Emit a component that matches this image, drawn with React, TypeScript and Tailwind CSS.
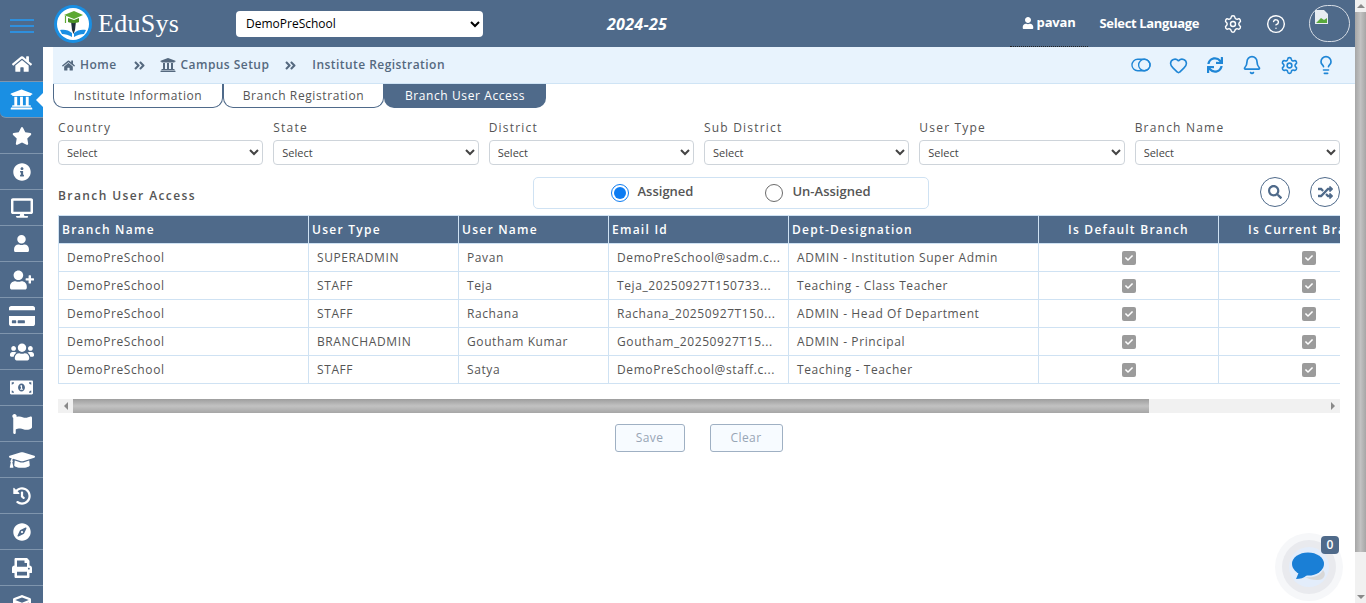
import { Bell, CircleHelp, Heart, Lightbulb, Settings } from 'lucide-react'
import {
  FaAngleDoubleRight,
  FaCheck,
  FaCompass,
  FaCreditCard,
  FaCube,
  FaDesktop,
  FaFlag,
  FaGraduationCap,
  FaHistory,
  FaHome,
  FaInfoCircle,
  FaMoneyBillAlt,
  FaPrint,
  FaRandom,
  FaSearch,
  FaStar,
  FaSync,
  FaUniversity,
  FaUser,
  FaUserPlus,
  FaUsers,
} from 'react-icons/fa'

const sideIcons = [
  { Icon: FaHome, size: 20 },
  { Icon: FaUniversity, size: 23, active: true },
  { Icon: FaStar, size: 20 },
  { Icon: FaInfoCircle, size: 18 },
  { Icon: FaDesktop, size: 22 },
  { Icon: FaUser, size: 17 },
  { Icon: FaUserPlus, size: 24 },
  { Icon: FaCreditCard, size: 26 },
  { Icon: FaUsers, size: 24 },
  { Icon: FaMoneyBillAlt, size: 23 },
  { Icon: FaFlag, size: 20 },
  { Icon: FaGraduationCap, size: 26 },
  { Icon: FaHistory, size: 18 },
  { Icon: FaCompass, size: 18 },
  { Icon: FaPrint, size: 20 },
  { Icon: FaCube, size: 18 },
]

const filters = ['Country', 'State', 'District', 'Sub District', 'User Type', 'Branch Name']

const rows = [
  ['DemoPreSchool', 'SUPERADMIN', 'Pavan', 'DemoPreSchool@sadm.c...', 'ADMIN - Institution Super Admin'],
  ['DemoPreSchool', 'STAFF', 'Teja', 'Teja_20250927T150733...', 'Teaching - Class Teacher'],
  ['DemoPreSchool', 'STAFF', 'Rachana', 'Rachana_20250927T150...', 'ADMIN - Head Of Department'],
  ['DemoPreSchool', 'BRANCHADMIN', 'Goutham Kumar', 'Goutham_20250927T15...', 'ADMIN - Principal'],
  ['DemoPreSchool', 'STAFF', 'Satya', 'DemoPreSchool@staff.c...', 'Teaching - Teacher'],
]

function Logo() {
  return (
    <svg width="38" height="38" viewBox="0 0 38 38" aria-hidden="true">
      <circle cx="19" cy="19" r="19" fill="#1a8fe3" />
      <circle cx="19" cy="19" r="16" fill="#ffffff" />
      <path d="M6 25c4-1 9 0 12 3v4c-3-2-7-3-10-3zM32 25c-4-1-9 0-12 3v4c3-2 7-3 10-3z" fill="#1a8fe3" />
      <path d="M17 16h5l-1 9-1.500 4-1.500-4z" fill="#1f2d3a" />
      <path d="M10 10l10-4 9 4-9 4z" fill="#5da832" />
      <path d="M14 13v4c3 1.500 8 1.500 11 0v-4l-5 2z" fill="#4a8f26" />
      <path d="M11.500 11v7" stroke="#5da832" strokeWidth="1.200" />
    </svg>
  )
}

function Check() {
  return (
    <span className="flex h-[14px] w-[14px] items-center justify-center rounded-[2px] bg-[#9b9b9b] text-white">
      <FaCheck size={8} />
    </span>
  )
}

function Radio({ checked, label }: { checked?: boolean; label: string }) {
  return (
    <div className="flex items-center gap-[9px]">
      <span
        className={`flex h-[18px] w-[18px] items-center justify-center rounded-full border ${checked ? 'border-[#0d7cf2]' : 'border-[#6b6b6b]'}`}
      >
        {checked && <span className="h-3 w-3 rounded-full bg-[#0d7cf2]" />}
      </span>
      <span className="-mt-[2px] text-[13px] font-semibold text-[#555]">{label}</span>
    </div>
  )
}

export default function App() {
  return (
    <div className="flex h-[603px] overflow-hidden bg-white font-['Open_Sans','Noto_Sans',sans-serif] text-[#555]">
      <div className="flex min-w-0 flex-1 flex-col">
        <header className="flex h-[47px] shrink-0 items-center bg-[#4f6a8a] text-white">
          <div className="flex w-[43px] shrink-0 flex-col items-center gap-[4px] pt-[5px]">
            <span className="h-[2px] w-6 bg-[#2f8fdc]" />
            <span className="h-[2px] w-6 bg-[#2f8fdc]" />
            <span className="h-[2px] w-6 bg-[#2f8fdc]" />
          </div>
          <div className="ml-[11px]">
            <Logo />
          </div>
          <span className="ml-[6px] w-[80px] font-['Liberation_Serif',serif] text-[26px] tracking-[0.3px]">EduSys</span>
          <select className="ml-[58px] h-[26px] w-[247px] rounded-[4px] bg-white pl-[6px] text-[12px] text-black">
            <option>DemoPreSchool</option>
          </select>
          <span className="ml-[124px] text-[16px] font-bold italic tracking-[0.3px]">2024-25</span>
          <div className="ml-auto flex h-[47px] w-[78px] items-center justify-center gap-[3px] border-b border-dotted border-[#222] text-[13px] font-bold tracking-[-0.2px]">
            <FaUser size={12} />
            pavan
          </div>
          <span className="ml-[12px] text-[13px] font-bold tracking-[-0.35px]">Select Language</span>
          <Settings className="ml-6" size={20} strokeWidth={1.7} />
          <CircleHelp className="ml-[23px]" size={20} strokeWidth={1.7} />
          <div className="relative ml-[23px] mr-[5px] h-[37px] w-[41px] rounded-full border border-[#d8dee6]">
            <svg className="absolute left-[4px] top-[3px]" width="16" height="16" viewBox="0 0 16 16" aria-hidden="true">
              <path d="M1 1h9l4 4v10H1z" fill="#e8edf2" />
              <path d="M2 14l5-5 3 2 3-2v5z" fill="#58a83c" />
            </svg>
          </div>
        </header>

        <div className="flex min-h-0 flex-1">
          <aside className="w-[43px] shrink-0 overflow-hidden bg-[#4f6a8a]">
            <div className="-mt-px">
              {sideIcons.map(({ Icon, size, active }, i) => (
                <div
                  key={i}
                  className={`relative flex h-[36px] items-center justify-center border-b border-[#7f95ad] text-white ${active ? 'rounded-bl-md bg-[#1a8fe3]' : ''}`}
                >
                  <Icon size={size} />
                  {active && (
                    <span className="absolute right-0 top-[11px] border-y-[7px] border-r-[7px] border-y-transparent border-r-white" />
                  )}
                </div>
              ))}
            </div>
          </aside>

          <main className="relative min-w-0 flex-1">
            <div className="ml-[10px] flex h-[37px] items-center border-b border-[#cfe4f5] bg-[#e8f3fd] pl-[9px] pr-[19px] text-[12px] font-semibold tracking-[0.45px] text-[#55697f]">
              <FaHome size={13} />
              <span className="ml-[5px]">Home</span>
              <FaAngleDoubleRight className="ml-[16px]" size={13} />
              <FaUniversity className="ml-[14px]" size={16} />
              <span className="ml-[5px]">Campus Setup</span>
              <FaAngleDoubleRight className="ml-[15px]" size={13} />
              <span className="ml-[15px]">Institute Registration</span>
              <div className="ml-auto flex items-center gap-[17px] text-[#1f86d6]">
                <span className="flex w-5 justify-center">
                  <svg width="21" height="14" viewBox="0 0 21 14" fill="none" stroke="currentColor" strokeWidth="1.4" aria-hidden="true">
                    <rect x="1" y="1" width="19" height="12" rx="6" />
                    <circle cx="14" cy="7" r="6" />
                  </svg>
                </span>
                <span className="flex w-5 justify-center"><Heart size={19} strokeWidth={2} /></span>
                <span className="flex w-5 justify-center"><FaSync size={16} /></span>
                <span className="flex w-5 justify-center"><Bell size={20} strokeWidth={2} /></span>
                <span className="flex w-5 justify-center"><Settings size={19} strokeWidth={2} /></span>
                <span className="flex w-5 justify-center"><Lightbulb size={20} strokeWidth={2} /></span>
              </div>
            </div>

            <div className="ml-[10px] flex h-[24px] text-[12px] tracking-[0.6px]">
              <div className="flex w-[170px] items-center justify-center rounded-b-[10px] border-x border-b border-[#4f6a8a]">Institute Information</div>
              <div className="flex w-[161px] items-center justify-center rounded-b-[10px] border-x border-b border-[#4f6a8a]">Branch Registration</div>
              <div className="flex w-[162px] items-center justify-center rounded-b-[10px] bg-[#4f6a8a] text-white">Branch User Access</div>
            </div>

            <div className="pl-[15px] pr-[15px]">
              <div className="mt-[11px] grid grid-cols-6 gap-x-[10px]">
                {filters.map((f) => (
                  <div key={f}>
                    <div className="h-[20px] text-[12px] leading-[17px] tracking-[1.2px]">{f}</div>
                    <select className="h-[25px] w-full rounded-[4px] border border-[#ced4da] bg-white pl-[4px] text-[11px] text-[#444]">
                      <option>Select</option>
                    </select>
                  </div>
                ))}
              </div>

              <div className="mt-3 flex h-[32px] items-start">
                <span className="mt-[10px] w-[475px] text-[12px] font-semibold tracking-[1.4px]">Branch User Access</span>
                <div className="flex h-[32px] w-[396px] items-center justify-center gap-[72px] rounded-[5px] border border-[#cfe2f3] pl-[19px]">
                  <Radio checked label="Assigned" />
                  <Radio label="Un-Assigned" />
                </div>
                <button className="ml-auto flex h-[30px] w-[30px] items-center justify-center rounded-full border border-[#4f6a8a] text-[#4f6a8a]">
                  <FaSearch size={14} />
                </button>
                <button className="ml-5 flex h-[30px] w-[30px] items-center justify-center rounded-full border border-[#4f6a8a] text-[#4f6a8a]">
                  <FaRandom size={15} />
                </button>
              </div>

              <div className="mt-[6px] overflow-hidden">
                <table className="w-[1460px] table-fixed border-collapse text-[12px] tracking-[0.6px]">
                  <colgroup>
                    <col className="w-[250px]" />
                    <col className="w-[150px]" />
                    <col className="w-[150px]" />
                    <col className="w-[180px]" />
                    <col className="w-[250px]" />
                    <col className="w-[180px]" />
                    <col className="w-[300px]" />
                  </colgroup>
                  <thead>
                    <tr className="h-[28px] bg-[#4f6a8a] text-left font-semibold text-white">
                      {['Branch Name', 'User Type', 'User Name', 'Email Id', 'Dept-Designation'].map((h) => (
                        <th key={h} className="border border-[#cfe2f3] px-[3px] font-semibold tracking-[1.25px]">{h}</th>
                      ))}
                      <th className="border border-[#cfe2f3] px-[3px] text-center font-semibold tracking-[1.25px]">Is Default Branch</th>
                      <th className="border border-[#cfe2f3] pl-[29px] text-left font-semibold tracking-[1.25px]">Is Current Branch</th>
                    </tr>
                  </thead>
                  <tbody>
                    {rows.map((row) => (
                      <tr key={row[3]} className="h-[28px]">
                        {row.map((c, i) => (
                          <td key={i} className="whitespace-nowrap border border-[#cfe2f3] px-2">{c}</td>
                        ))}
                        <td className="border border-[#cfe2f3]">
                          <span className="flex justify-center"><Check /></span>
                        </td>
                        <td className="border border-[#cfe2f3] pl-[83px]"><Check /></td>
                      </tr>
                    ))}
                  </tbody>
                </table>
              </div>

              <div className="mt-[15px] flex h-[14px] items-stretch bg-[#f1f1f1]">
                <div className="flex w-[15px] items-center justify-center bg-[#f1f1f1]">
                  <span className="border-y-[4px] border-r-[4px] border-y-transparent border-r-[#8a8a8a]" />
                </div>
                <div className="flex-1">
                  <div className="h-full w-[1076px] bg-gradient-to-b from-[#9e9e9e] via-[#c2c2c2] to-[#a6a6a6]" />
                </div>
                <div className="flex w-[15px] items-center justify-center bg-[#f1f1f1]">
                  <span className="border-y-[4px] border-l-[4px] border-y-transparent border-l-[#8a8a8a]" />
                </div>
              </div>

              <div className="mt-[11px] flex justify-center gap-[25px] pr-[1px] text-[12px] tracking-[0.4px] text-[#97a5b5]">
                <button className="h-[28px] w-[70px] rounded-[3px] border border-[#9fb0c3] bg-[#f7fbff]">Save</button>
                <button className="h-[28px] w-[73px] rounded-[3px] border border-[#9fb0c3] bg-[#f7fbff]">Clear</button>
              </div>
            </div>

            <div className="absolute bottom-[2px] right-[12px] flex h-[68px] w-[68px] items-center justify-center rounded-full bg-[#f6f7f9]">
              <div className="flex h-[54px] w-[54px] items-center justify-center rounded-full bg-[#e9eaee]">
                <div className="flex h-[40px] w-[40px] items-center justify-center rounded-full bg-[#e3edfb]">
                  <svg width="36" height="30" viewBox="0 0 36 30" aria-hidden="true">
                    <path d="M14 25c8 1 15-1 18-7 3 3 2 7-1 9-4 2-12 1-17-2z" fill="#d8d8d8" />
                    <ellipse cx="17" cy="12" rx="16" ry="11.500" fill="#1a7fd6" />
                    <path d="M8 20l-3 7c4 0 8-1 11-4z" fill="#1a7fd6" />
                  </svg>
                </div>
              </div>
              <span className="absolute right-[4px] top-[3px] flex h-[18px] w-[18px] items-center justify-center rounded-[4px] bg-[#4f6a8a] text-[12px] font-semibold text-white">0</span>
            </div>
          </main>
        </div>
      </div>

      <div className="flex w-[11px] shrink-0 flex-col bg-[#f1f1f1]">
        <div className="flex h-[12px] items-center justify-center">
          <span className="border-x-[4px] border-b-[4px] border-x-transparent border-b-[#8a8a8a]" />
        </div>
        <div className="h-[540px] bg-gradient-to-r from-[#a6a6a6] via-[#c2c2c2] to-[#a6a6a6]" />
        <div className="mt-auto flex h-[12px] items-center justify-center">
          <span className="border-x-[4px] border-t-[4px] border-x-transparent border-t-[#8a8a8a]" />
        </div>
      </div>
    </div>
  )
}
